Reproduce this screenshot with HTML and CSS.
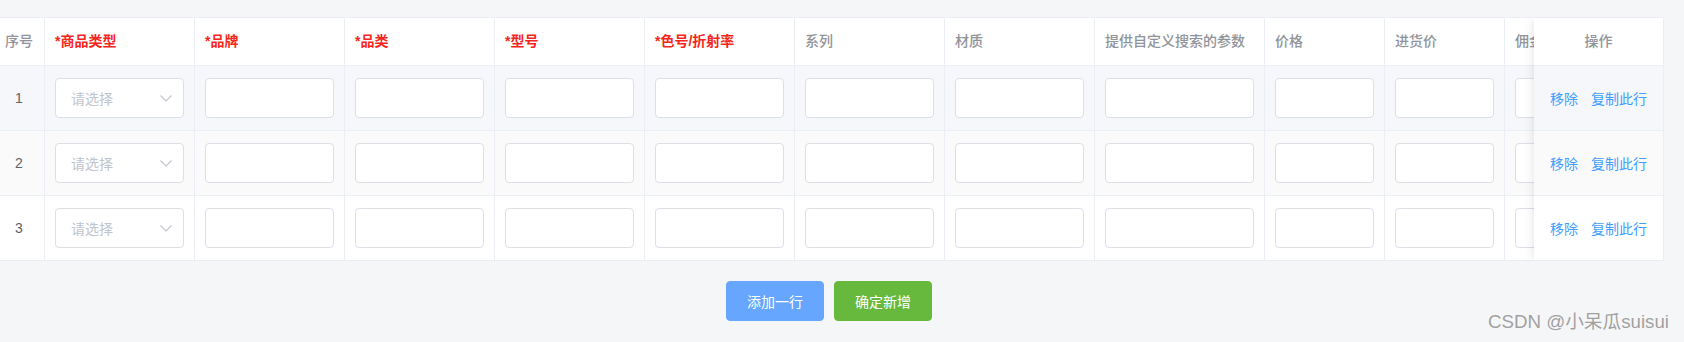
FILE: index.html
```html
<!DOCTYPE html>
<html lang="zh-CN">
<head>
<meta charset="utf-8">
<title>商品新增</title>
<link rel="stylesheet" href="styles.css">
</head>
<body>
<div class="page">
  <div class="table-wrap">
    <table class="grid">
      <colgroup>
        <col class="c-idx"><col class="c150"><col class="c150"><col class="c150"><col class="c150"><col class="c150"><col class="c150"><col class="c150"><col class="c170"><col class="c120"><col class="c120"><col class="c120">
      </colgroup>
      <thead>
        <tr>
          <th class="idx">序号</th>
          <th class="req">*商品类型</th>
          <th class="req">*品牌</th>
          <th class="req">*品类</th>
          <th class="req">*型号</th>
          <th class="req">*色号/折射率</th>
          <th>系列</th>
          <th>材质</th>
          <th>提供自定义搜索的参数</th>
          <th>价格</th>
          <th>进货价</th>
          <th>佣金</th>
        </tr>
      </thead>
      <tbody>
        <tr class="row-hover">
          <td class="idx">1</td>
          <td><div class="select"><span class="ph">请选择</span><svg class="arrow" viewBox="0 0 12 7" width="12" height="7"><path d="M0.5 0.5 L6 6 L11.5 0.5" fill="none" stroke="#c0c4cc" stroke-width="1.1"/></svg></div></td>
          <td><input class="input" type="text"></td>
          <td><input class="input" type="text"></td>
          <td><input class="input" type="text"></td>
          <td><input class="input" type="text"></td>
          <td><input class="input" type="text"></td>
          <td><input class="input" type="text"></td>
          <td><input class="input" type="text"></td>
          <td><input class="input" type="text"></td>
          <td><input class="input" type="text"></td>
          <td><input class="input" type="text"></td>
        </tr>
        <tr class="row-stripe">
          <td class="idx">2</td>
          <td><div class="select"><span class="ph">请选择</span><svg class="arrow" viewBox="0 0 12 7" width="12" height="7"><path d="M0.5 0.5 L6 6 L11.5 0.5" fill="none" stroke="#c0c4cc" stroke-width="1.1"/></svg></div></td>
          <td><input class="input" type="text"></td>
          <td><input class="input" type="text"></td>
          <td><input class="input" type="text"></td>
          <td><input class="input" type="text"></td>
          <td><input class="input" type="text"></td>
          <td><input class="input" type="text"></td>
          <td><input class="input" type="text"></td>
          <td><input class="input" type="text"></td>
          <td><input class="input" type="text"></td>
          <td><input class="input" type="text"></td>
        </tr>
        <tr>
          <td class="idx">3</td>
          <td><div class="select"><span class="ph">请选择</span><svg class="arrow" viewBox="0 0 12 7" width="12" height="7"><path d="M0.5 0.5 L6 6 L11.5 0.5" fill="none" stroke="#c0c4cc" stroke-width="1.1"/></svg></div></td>
          <td><input class="input" type="text"></td>
          <td><input class="input" type="text"></td>
          <td><input class="input" type="text"></td>
          <td><input class="input" type="text"></td>
          <td><input class="input" type="text"></td>
          <td><input class="input" type="text"></td>
          <td><input class="input" type="text"></td>
          <td><input class="input" type="text"></td>
          <td><input class="input" type="text"></td>
          <td><input class="input" type="text"></td>
        </tr>
      </tbody>
    </table>
    <table class="fixed">
      <thead>
        <tr><th>操作</th></tr>
      </thead>
      <tbody>
        <tr class="row-hover"><td><span class="link">移除</span><span class="link gap">复制此行</span></td></tr>
        <tr class="row-stripe"><td><span class="link">移除</span><span class="link gap">复制此行</span></td></tr>
        <tr><td><span class="link">移除</span><span class="link gap">复制此行</span></td></tr>
      </tbody>
    </table>
  </div>
  <div class="actions">
    <button class="btn btn-add" type="button">添加一行</button>
    <button class="btn btn-ok" type="button">确定新增</button>
  </div>
  <div class="watermark">CSDN @小呆瓜suisui</div>
</div>
</body>
</html>
```

FILE: styles.css
```css
* { box-sizing: border-box; }
html, body {
  margin: 0;
  padding: 0;
  background: #f5f6f8;
  font-family: "Liberation Sans", "Noto Sans CJK SC", sans-serif;
  font-size: 14px;
}
.page {
  position: relative;
  width: 1684px;
  height: 342px;
  padding-top: 17px;
}
.table-wrap {
  position: relative;
  width: 1664px;
  overflow: hidden;
  background: #fff;
  border-top: 1px solid #ebeef5;
}
.grid {
  border-collapse: separate;
  border-spacing: 0;
  table-layout: fixed;
  width: 1575px;
}
.c-idx { width: 45px; }
.c150 { width: 150px; }
.c170 { width: 170px; }
.c120 { width: 120px; }

th, td {
  border-right: 1px solid #ebeef5;
  border-bottom: 1px solid #ebeef5;
  padding: 12px 10px;
  text-align: left;
  vertical-align: middle;
  white-space: nowrap;
  overflow: hidden;
}
th {
  height: 48px;
  line-height: 23px;
  color: #909399;
  font-weight: 500;
  background: #fff;
}
th.req {
  color: #f5261b;
  font-weight: 700;
}
td {
  height: 65px;
  color: #606266;
  background: #fff;
}
.idx {
  text-align: center;
  padding: 12px 6px 12px 0;
}
.row-hover td { background: #f5f7fa; }
.row-stripe td { background: #fafafa; }

.input {
  display: block;
  width: 100%;
  height: 40px;
  margin: 0;
  border: 1px solid #dcdfe6;
  border-radius: 4px;
  background: #fff;
  outline: none;
  font: inherit;
}
.select {
  display: flex;
  align-items: center;
  justify-content: space-between;
  height: 40px;
  border: 1px solid #dcdfe6;
  border-radius: 4px;
  background: #fff;
  padding: 0 11px 0 15px;
}
.ph { color: #c0c4cc; }
.arrow { display: block; }

.fixed {
  position: absolute;
  top: 0;
  right: 0;
  width: 130px;
  border-collapse: separate;
  border-spacing: 0;
  table-layout: fixed;
  box-shadow: 0 0 10px rgba(0, 0, 0, 0.12);
}
.fixed th, .fixed td {
  text-align: center;
  padding: 12px 0;
}
.link { color: #409eff; }
.link.gap { margin-left: 13px; }

.actions {
  display: flex;
  justify-content: center;
  gap: 10px;
  width: 1664px;
  padding-right: 6px;
  margin-top: 20px;
}
.btn {
  width: 98px;
  height: 40px;
  border-radius: 4px;
  border: 1px solid transparent;
  color: #fff;
  font: inherit;
  font-size: 14px;
  cursor: pointer;
}
.btn-add { background: #66a6ff; border-color: #66a6ff; }
.btn-ok { background: #67b93e; border-color: #67b93e; }

.watermark {
  position: absolute;
  right: 15px;
  bottom: 10px;
  font-size: 18.7px;
  line-height: 20px;
  color: #a0a0a0;
  text-shadow: 0 0 1px #fff;
}
```
